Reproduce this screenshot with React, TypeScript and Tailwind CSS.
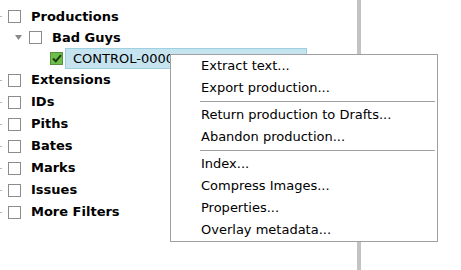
const font = { fontFamily: '"DejaVu Sans", Verdana, sans-serif' };

const filters = ['Extensions', 'IDs', 'Piths', 'Bates', 'Marks', 'Issues', 'More Filters'];

const menu: (string | null)[] = [
  'Extract text...',
  'Export production...',
  null,
  'Return production to Drafts...',
  'Abandon production...',
  null,
  'Index...',
  'Compress Images...',
  'Properties...',
  'Overlay metadata...',
];

const Box = ({ checked }: { checked?: boolean }) =>
  checked ? (
    <div className="w-[13px] h-[13px] border border-[#5a8f3e] bg-[#6cc04a] flex items-center justify-center shrink-0">
      <svg width="10" height="9" viewBox="0 0 10 9">
        <path d="M1 4.5 L3.8 7.2 L9 1.2" fill="none" stroke="#1f3a12" strokeWidth="2" />
      </svg>
    </div>
  ) : (
    <div className="w-[13px] h-[13px] border border-[#8c8c8c] bg-white shrink-0" />
  );

const Dot = () => <div className="w-[2px] h-px bg-[#b8b8b8] shrink-0" />;

const App = () => {
  return (
    <div className="relative w-[461px] h-[270px] bg-white overflow-hidden flex text-black" style={font}>
      <div className="w-[357px] pt-[6px] text-[13px]">
        <div className="h-[21px] flex items-center">
          <Dot />
          <div className="ml-[6px]"><Box /></div>
          <span className="ml-[10px] font-bold">Productions</span>
        </div>
        <div className="h-[21px] flex items-center">
          <svg className="ml-[15px]" width="7" height="5" viewBox="0 0 7 5">
            <path d="M0 0 L7 0 L3.5 5 Z" fill="#8a8a8a" />
          </svg>
          <div className="ml-[7px]"><Box /></div>
          <span className="ml-[10px] font-bold">Bad Guys</span>
        </div>
        <div className="h-[21px] flex items-center">
          <div className="ml-[50px]"><Box checked /></div>
          <div className="ml-[2px] h-[21px] w-[242px] bg-[#c6e4ef] border border-[#9fd0e2] flex items-center pl-[7px] overflow-hidden whitespace-nowrap">
            CONTROL-000001
          </div>
        </div>
        {filters.map((f) => (
          <div key={f} className="h-[22px] flex items-center">
            <Dot />
            <div className="ml-[6px]"><Box /></div>
            <span className="ml-[10px] font-bold">{f}</span>
          </div>
        ))}
      </div>
      <div className="w-[4px] h-full bg-[#c3c3c3]" />

      <div className="absolute left-[170px] top-[54px] w-[268px] bg-white border border-[#a0a0a0] text-[13px]">
        {menu.map((m, i) =>
          m === null ? (
            <div key={i} className="ml-[29px] mr-[2px] mt-[2px] mb-[2px] h-px bg-[#a0a0a0]" />
          ) : (
            <div key={i} className="h-[22px] flex items-center pl-[30px] whitespace-nowrap">
              {m}
            </div>
          )
        )}
      </div>
    </div>
  );
};

export default App;
